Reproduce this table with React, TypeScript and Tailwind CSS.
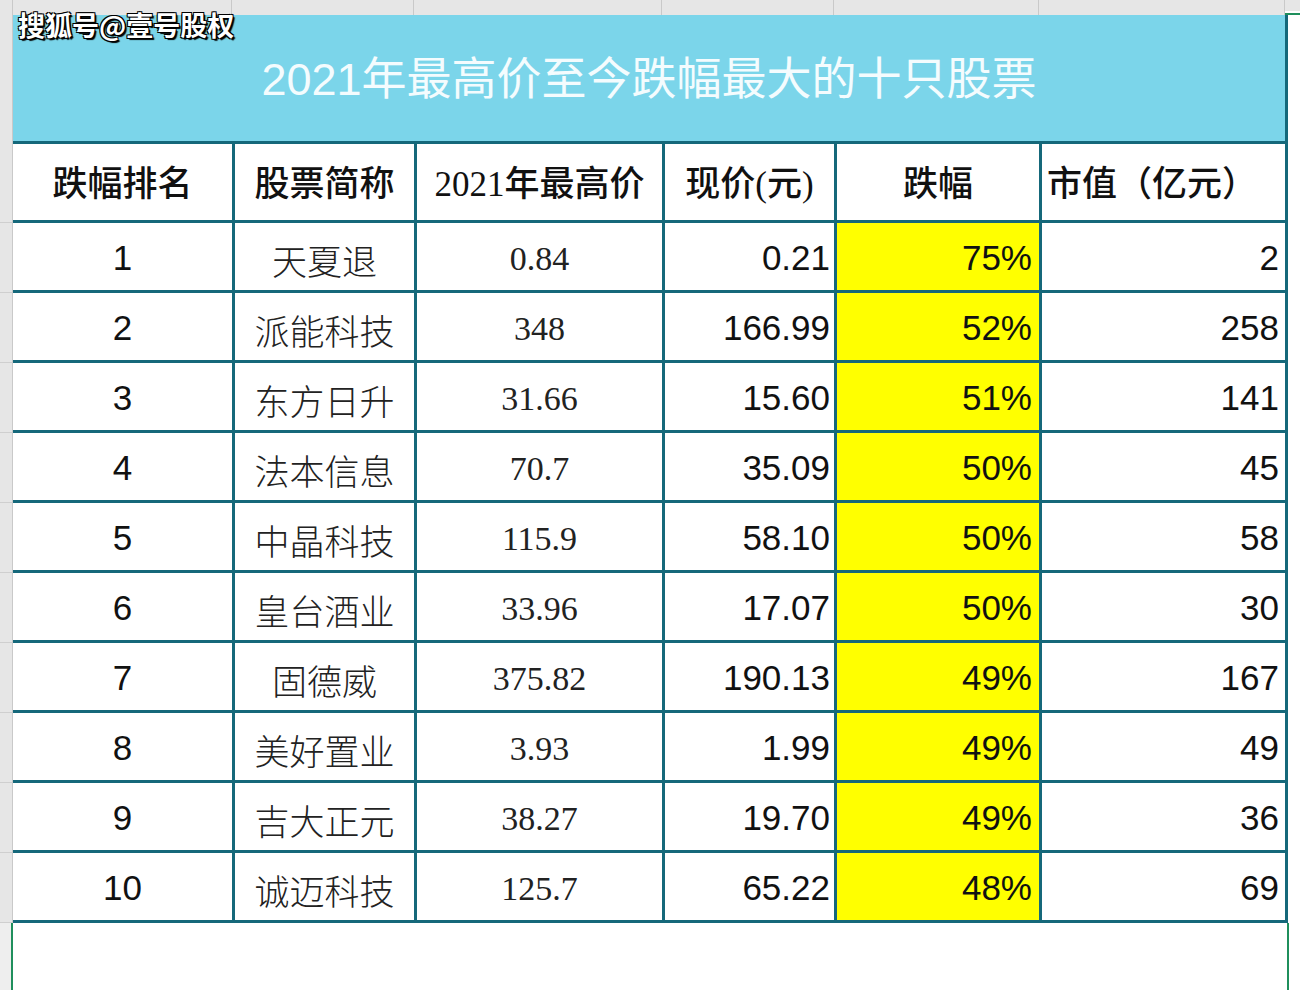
const rows = [
  { rank: "1", name: "天夏退", high: "0.84", now: "0.21", drop: "75%", cap: "2" },
  { rank: "2", name: "派能科技", high: "348", now: "166.99", drop: "52%", cap: "258" },
  { rank: "3", name: "东方日升", high: "31.66", now: "15.60", drop: "51%", cap: "141" },
  { rank: "4", name: "法本信息", high: "70.7", now: "35.09", drop: "50%", cap: "45" },
  { rank: "5", name: "中晶科技", high: "115.9", now: "58.10", drop: "50%", cap: "58" },
  { rank: "6", name: "皇台酒业", high: "33.96", now: "17.07", drop: "50%", cap: "30" },
  { rank: "7", name: "固德威", high: "375.82", now: "190.13", drop: "49%", cap: "167" },
  { rank: "8", name: "美好置业", high: "3.93", now: "1.99", drop: "49%", cap: "49" },
  { rank: "9", name: "吉大正元", high: "38.27", now: "19.70", drop: "49%", cap: "36" },
  { rank: "10", name: "诚迈科技", high: "125.7", now: "65.22", drop: "48%", cap: "69" },
];

const sans = "font-['Liberation_Sans','Noto_Sans_CJK_SC',sans-serif]";
const serif = "font-['Liberation_Serif','Noto_Sans_CJK_SC',serif]";
const cjk = "font-['Noto_Sans_CJK_SC',sans-serif]";

// column widths of the sheet (gutter, six columns, spare)
const stripCols = [219, 182, 248, 172, 205, 246];

export default function App() {
  return (
    <div className="relative w-[1300px] h-[990px] overflow-hidden bg-white">
      {/* column header strip */}
      <div className="flex h-[15px] bg-[#e6e6e6]">
        <div className="w-[13px] border-r border-[#c9c9c9]" />
        {stripCols.map((w, i) => (
          <div key={i} className="border-r border-[#c9c9c9]" style={{ width: w }} />
        ))}
        <div className="flex-1 bg-white border-b-2 border-[#1f8f5c] mt-[11px]" />
      </div>

      <div className="flex">
        {/* row header gutter */}
        <div className="w-[13px] bg-[#e6e6e6] border-r border-[#c9c9c9] flex flex-col">
          <div className="h-[208px] border-b border-[#cfcfcf]" />
          {rows.map((r) => (
            <div key={r.rank} className="h-[70px] border-b border-[#cfcfcf]" />
          ))}
        </div>

        {/* sheet */}
        <div className="w-[1275px] border-r-[3px] border-[#15687a]">
          <div className="h-[126px] bg-[#7bd5ea] flex items-center justify-center pt-[3px]">
            <span className={`${sans} text-[45px] leading-none text-[#f4fcfe]`}>
              2021年最高价至今跌幅最大的十只股票
            </span>
          </div>
          <div className="grid grid-cols-[219px_179px_245px_169px_202px_243px] gap-[3px] bg-[#15687a] py-[3px]">
            <Head className="justify-center">跌幅排名</Head>
            <Head className="justify-center">股票简称</Head>
            <Head className="justify-center">2021年最高价</Head>
            <Head className="justify-center">现价(元)</Head>
            <Head className="justify-center">跌幅</Head>
            <Head className="justify-start pl-[5px]">市值（亿元）</Head>
            {rows.map((r) => (
              <Row key={r.rank} r={r} />
            ))}
          </div>
        </div>
        <div className="flex-1" />
      </div>

      {/* empty area under the table, selection edges */}
      <div className="flex h-[70px]">
        <div className="w-[11px] bg-[#eeeeee]" />
        <div className="w-[2px] bg-[#1f8f5c]" />
        <div className="w-[1274px]" />
        <div className="w-[2px] bg-[#1f8f5c]" />
      </div>

      {/* watermark */}
      <div
        className={`absolute left-[18px] top-[11px] ${cjk} font-bold text-[27px] leading-none text-white [text-shadow:1px_1px_0_#000,-1px_-1px_0_#000,1px_-1px_0_#000,-1px_1px_0_#000,2px_2px_1px_#000]`}
      >
        搜狐号@壹号股权
      </div>
    </div>
  );
}

function Head({ children, className }: { children: React.ReactNode; className: string }) {
  return (
    <div
      className={`h-[76px] bg-white flex items-center pt-[5px] ${className} ${serif} font-medium text-[35px] leading-none text-[#111]`}
    >
      {children}
    </div>
  );
}

function Row({ r }: { r: (typeof rows)[number] }) {
  const cell = "h-[67px] flex items-center pt-[3px]";
  return (
    <>
      <div className={`${cell} bg-white justify-center ${sans} text-[35px] text-[#111]`}>{r.rank}</div>
      <div className={`${cell} bg-white justify-center pt-[8px] ${cjk} font-light text-[35px] text-[#222]`}>
        {r.name}
      </div>
      <div className={`${cell} bg-white justify-center ${serif} text-[34px] text-[#222]`}>{r.high}</div>
      <div className={`${cell} bg-white justify-end pr-[4px] ${sans} text-[35px] text-[#111]`}>{r.now}</div>
      <div className={`${cell} bg-[#ffff00] justify-end pr-[7px] ${sans} text-[35px] text-[#111]`}>{r.drop}</div>
      <div className={`${cell} bg-white justify-end pr-[6px] ${sans} text-[35px] text-[#111]`}>{r.cap}</div>
    </>
  );
}
